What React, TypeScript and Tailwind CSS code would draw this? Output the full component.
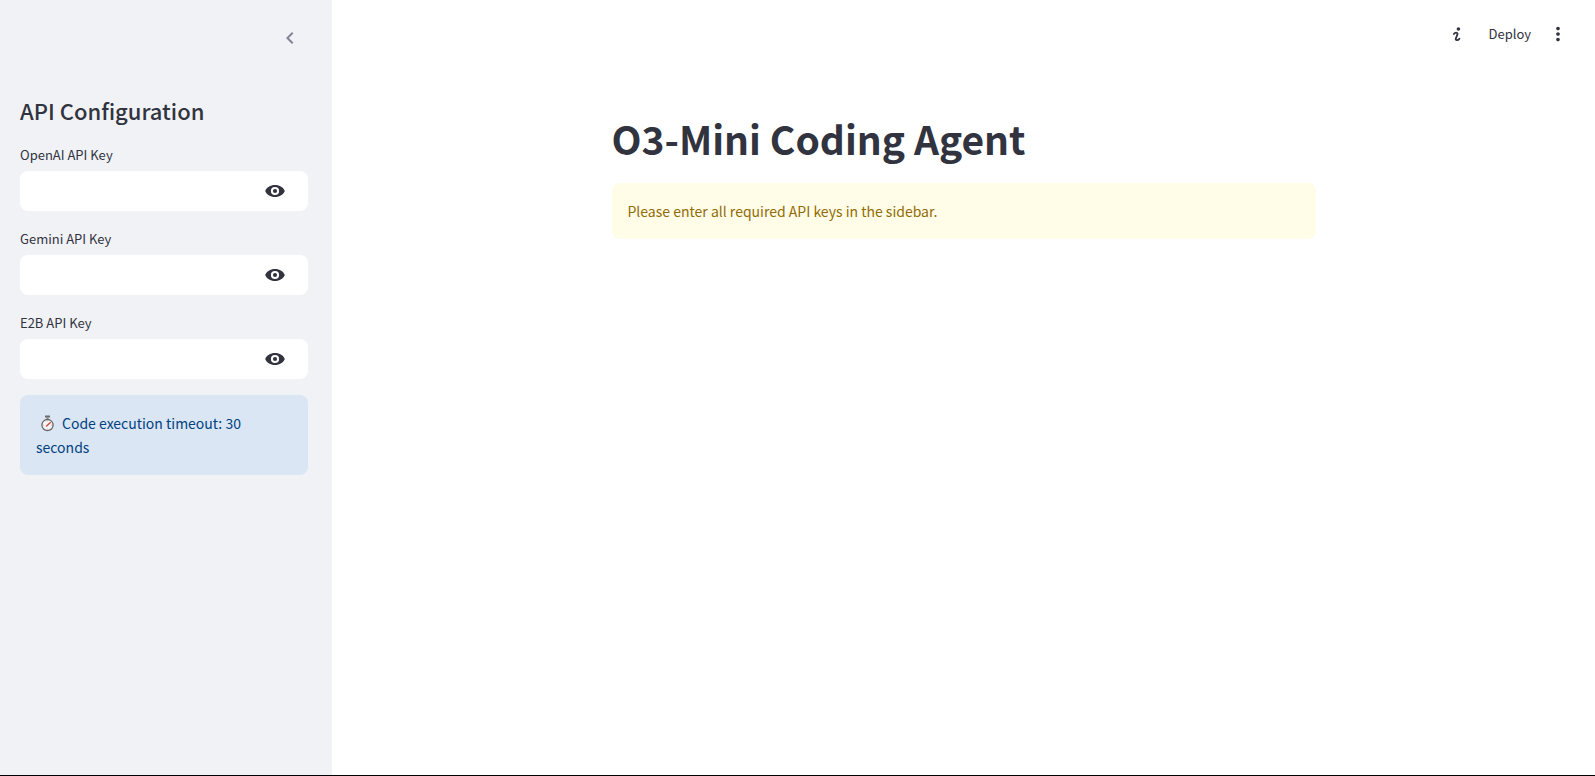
import { useState } from "react";
import { MdChevronLeft, MdMoreVert } from "react-icons/md";

function EyeIcon() {
  return (
    <svg viewBox="0 0 20 12" className="h-3 w-5" fill="currentColor" aria-hidden="true">
      <path
        fillRule="evenodd"
        d="M10 0C5.2 0 1.6 2.4 0.2 6C1.6 9.6 5.2 12 10 12C14.8 12 18.4 9.6 19.8 6C18.4 2.4 14.8 0 10 0ZM10 1.9A4.1 4.1 0 1 1 10 10.1A4.1 4.1 0 1 1 10 1.9Z"
      />
      <circle cx="10" cy="6" r="2.1" />
    </svg>
  );
}

function StopwatchIcon() {
  return (
    <svg viewBox="0 0 13 17" className="h-[17px] w-[13px]" role="img" aria-label="Stopwatch">
      <rect x="4" y="0.4" width="5" height="2.2" rx="0.4" fill="#6b6b6b" />
      <rect x="5.5" y="2.4" width="2" height="2" fill="#8a8a8a" />
      <circle cx="6.5" cy="10.1" r="5.6" fill="#f6f4f5" stroke="#6a6867" strokeWidth="1.3" />
      <path d="M5.6 11.1L9.4 7.6" stroke="#d8413c" strokeWidth="1.3" strokeLinecap="round" />
      <path d="M6.5 5.6v1M6.5 13.6v1M2 10.1h1M10 10.1h1" stroke="#a8a8a8" strokeWidth="0.6" />
    </svg>
  );
}

function ScriptInfoIcon() {
  return (
    <svg viewBox="0 0 8 15" className="h-[15px] w-2" fill="none" aria-hidden="true">
      <circle cx="5.4" cy="2" r="1.8" fill="currentColor" />
      <path
        d="M0.9 7C1.7 5.9 2.9 5.6 3.7 5.8C4.6 6.1 4.6 6.9 4.3 7.7L2.9 11.3C2.5 12.5 2.9 13.2 3.8 13.2C4.8 13.2 5.8 12.6 6.4 11.7"
        stroke="currentColor"
        strokeWidth="1.8"
        strokeLinecap="round"
      />
    </svg>
  );
}

function KeyField({ id, label }: { id: string; label: string }) {
  const [shown, setShown] = useState(false);
  return (
    <div className="flex flex-col gap-1">
      <label htmlFor={id} className="text-[13px] leading-6">
        {label}
      </label>
      <div className="flex h-10 items-center rounded-lg bg-white pr-[23px]">
        <input
          id={id}
          type={shown ? "text" : "password"}
          autoComplete="off"
          className="h-full min-w-0 flex-1 rounded-lg bg-transparent px-3 text-sm outline-none"
        />
        <button type="button" aria-label={`Show ${label}`} onClick={() => setShown(!shown)}>
          <EyeIcon />
        </button>
      </div>
    </div>
  );
}

export default function App() {
  return (
    <div className="flex min-h-screen border-b border-black bg-white font-['Noto_Sans_CJK_SC',sans-serif] text-[#31333f]">
      <aside className="flex w-[332px] shrink-0 flex-col bg-[#f0f2f6] pr-6 pl-5">
        <div className="flex h-[76px] items-center justify-end pr-1.5">
          <button type="button" aria-label="Collapse sidebar" className="text-[#808495]">
            <MdChevronLeft size={24} />
          </button>
        </div>
        <h2 className="pt-[18px] text-[22px] leading-8 font-medium">API Configuration</h2>
        <div className="flex flex-col gap-4 pt-[17px]">
          <KeyField id="openai-key" label="OpenAI API Key" />
          <KeyField id="gemini-key" label="Gemini API Key" />
          <KeyField id="e2b-key" label="E2B API Key" />
          <p className="rounded-lg bg-[#dae6f3] p-4 text-[14px] leading-6 text-[#004280]">
            <span className="-my-1 mr-2 ml-[5px] inline-flex pb-1 align-middle">
              <StopwatchIcon />
            </span>
            Code execution timeout: 30 seconds
          </p>
        </div>
      </aside>
      <div className="flex min-w-0 flex-1 flex-col">
        <header className="flex h-[68px] items-center justify-end pr-[26px]">
          <button type="button" aria-label="Information" className="mr-7">
            <ScriptInfoIcon />
          </button>
          <button type="button" className="mr-4 text-[13px] leading-6">
            Deploy
          </button>
          <button type="button" aria-label="Menu">
            <MdMoreVert size={22} />
          </button>
        </header>
        <main className="mx-auto w-full max-w-[736px] px-4 pt-[42px]">
          <h1 className="text-[39px] leading-[56px] font-bold">O3-Mini Coding Agent</h1>
          <p className="mt-[17px] rounded-lg bg-[#fffce7] p-4 text-[14px] leading-6 text-[#926c05]">
            Please enter all required API keys in the sidebar.
          </p>
        </main>
      </div>
    </div>
  );
}
